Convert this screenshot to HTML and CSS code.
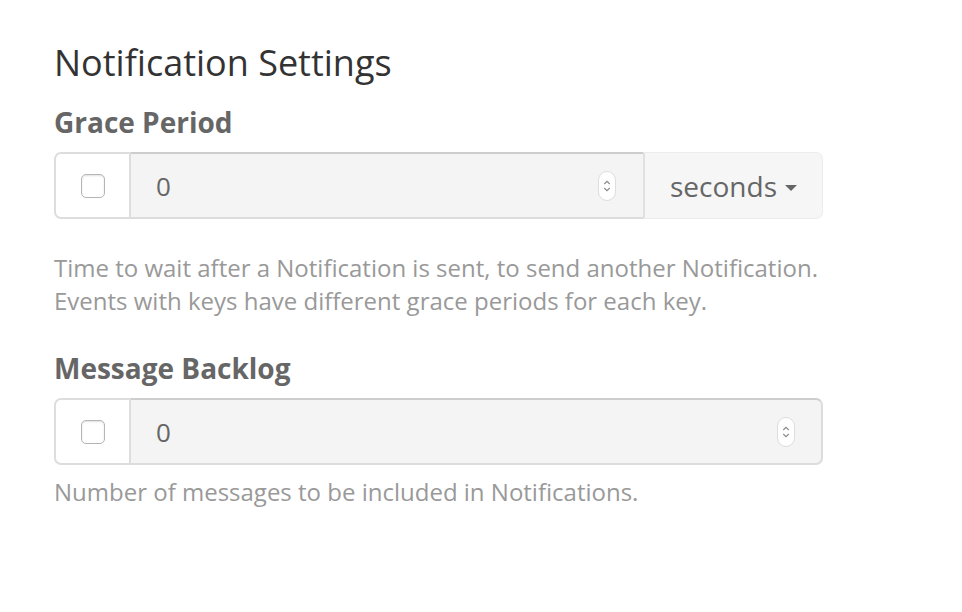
FILE: index.html
```html
<!DOCTYPE html>
<html lang="en">
<head>
    <meta charset="UTF-8">
    <title>Notification Settings</title>
    <link rel="stylesheet" href="styles.css">
</head>
<body>
    <div class="settings">
        <h2 class="settings-title">Notification Settings</h2>

        <div class="field">
            <label class="field-label">Grace Period</label>
            <div class="input-group">
                <span class="addon addon-check"><span class="checkbox"></span></span>
                <div class="number-input">
                    <span class="value">0</span>
                    <span class="spinner">
                        <svg width="12" height="24" viewBox="0 0 12 24"><path d="M3.3 10 L6 7.3 L8.7 10 M3.3 14 L6 16.7 L8.7 14" fill="none" stroke="#888" stroke-width="1.1"/></svg>
                    </span>
                </div>
                <span class="addon addon-unit">seconds <span class="caret"></span></span>
            </div>
            <p class="help help-spaced">Time to wait after a Notification is sent, to send another Notification.<br>Events with keys have different grace periods for each key.</p>
        </div>

        <div class="field">
            <label class="field-label">Message Backlog</label>
            <div class="input-group">
                <span class="addon addon-check"><span class="checkbox"></span></span>
                <div class="number-input number-input-last">
                    <span class="value">0</span>
                    <span class="spinner">
                        <svg width="12" height="24" viewBox="0 0 12 24"><path d="M3.3 10 L6 7.3 L8.7 10 M3.3 14 L6 16.7 L8.7 14" fill="none" stroke="#888" stroke-width="1.1"/></svg>
                    </span>
                </div>
            </div>
            <p class="help">Number of messages to be included in Notifications.</p>
        </div>
    </div>
</body>
</html>
```

FILE: styles.css
```css
body {
    margin: 0;
    font-family: "Open Sans", sans-serif;
    background-color: #fff;
    color: #333;
}

.settings {
    width: 769px;
    padding: 38px 0 0 54px;
}

.settings-title {
    font-size: 36px;
    font-weight: 400;
    margin: 0 0 16px;
    line-height: 50px;
    color: #333;
}

.field {
    margin-bottom: 33px;
}

.field-label {
    display: block;
    font-size: 28px;
    font-weight: 700;
    color: #666;
    line-height: 36px;
    margin-bottom: 12px;
}

.input-group {
    display: flex;
    height: 67px;
}

.addon {
    display: flex;
    align-items: center;
    justify-content: center;
    box-sizing: border-box;
}

.addon-check {
    width: 77px;
    border: 2px solid #ddd;
    border-radius: 7px 0 0 7px;
    background-color: #fff;
}

.checkbox {
    width: 24px;
    height: 24px;
    box-sizing: border-box;
    border: 1px solid #b5b5b5;
    border-radius: 5px;
    box-shadow: inset 0 1px 2px rgba(0, 0, 0, 0.12);
    background-color: #fff;
}

.number-input {
    flex: 1;
    display: flex;
    align-items: center;
    justify-content: space-between;
    padding: 0 27px 0 25px;
    background-color: #f4f4f4;
    border-top: 2px solid #cdcdcd;
    border-bottom: 2px solid #dcdcdc;
    box-sizing: border-box;
    font-size: 26px;
    color: #666;
}

.number-input-last {
    border-right: 2px solid #dcdcdc;
    border-radius: 0 7px 7px 0;
    padding-right: 26px;
}

.spinner {
    display: flex;
    align-items: center;
    justify-content: center;
    width: 18px;
    height: 30px;
    box-sizing: border-box;
    border: 1px solid #ddd;
    border-radius: 9px;
    background-color: #fff;
}

.addon-unit {
    width: 180px;
    border: 1px solid #ececec;
    border-left: 2px solid #e0e0e0;
    border-radius: 0 7px 7px 0;
    background-color: #f6f6f6;
    font-size: 28px;
    color: #666;
    gap: 8px;
}

.caret {
    width: 0;
    height: 0;
    border-left: 6px solid transparent;
    border-right: 6px solid transparent;
    border-top: 6px solid #666;
    margin-top: 4px;
}

.help {
    margin: 10px 0 0;
    font-size: 24px;
    line-height: 33px;
    color: #999;
}

.help-spaced {
    margin-top: 32px;
}
```
